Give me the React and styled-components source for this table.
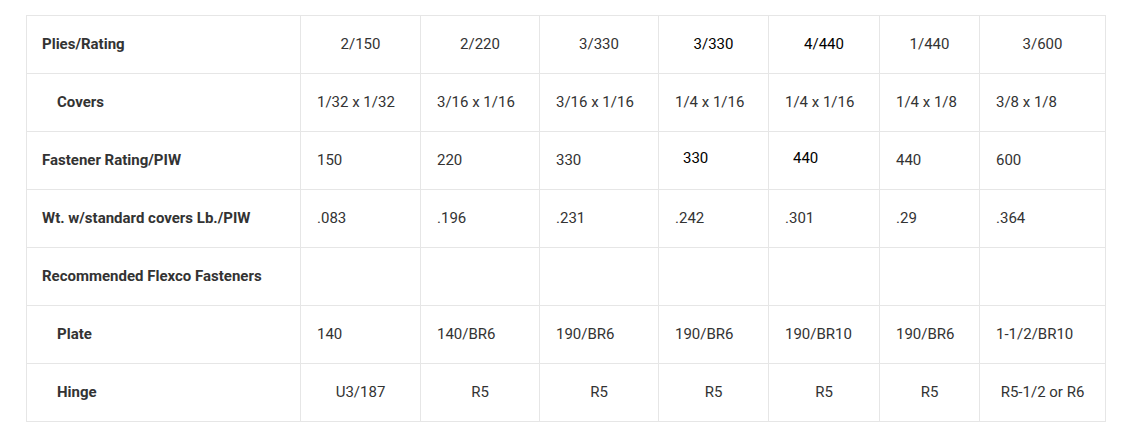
import React from "react";
import styled, { createGlobalStyle } from "styled-components";

const Global = createGlobalStyle`
  html, body { margin: 0; padding: 0; background: #fff; }
  body { font-family: Roboto, "Liberation Sans", Arial, sans-serif; }
`;

const Page = styled.div`
  padding: 15px 26px;
`;

const Table = styled.table`
  border-collapse: collapse;
  table-layout: fixed;
  width: 1080px;
  font-family: Roboto, "Liberation Sans", Arial, sans-serif;
  font-size: 15px;
  line-height: 20px;
  color: #333;
`;

const Row = styled.tr`
  height: 58px;
`;

const Label = styled.td`
  border: 1px solid #e6e6e6;
  padding: 0 0 1px ${(p) => (p.$indent ? 30 : 15)}px;
  font-weight: 700;
  color: #333;
  vertical-align: middle;
  white-space: nowrap;
`;

const Cell = styled.td`
  border: 1px solid #e6e6e6;
  padding: 0 0 ${(p) => (p.$raise ? 5 : 1)}px ${(p) => (p.$center ? 0 : p.$pad || 16)}px;
  text-align: ${(p) => (p.$center ? "center" : "left")};
  color: ${(p) => (p.$dark ? "#000" : "#333")};
  vertical-align: middle;
  white-space: nowrap;
`;

const widths = [274, 120, 119, 119, 110, 111, 100, 126];

const rows = [
  { label: "Plies/Rating", center: true, values: ["2/150", "2/220", "3/330", "3/330", "4/440", "1/440", "3/600"], dark: [3, 4] },
  { label: "Covers", indent: true, values: ["1/32 x 1/32", "3/16 x 1/16", "3/16 x 1/16", "1/4 x 1/16", "1/4 x 1/16", "1/4 x 1/8", "3/8 x 1/8"] },
  { label: "Fastener Rating/PIW", values: ["150", "220", "330", "330", "440", "440", "600"], dark: [3, 4], shifted: [3, 4] },
  { label: "Wt. w/standard covers Lb./PIW", values: [".083", ".196", ".231", ".242", ".301", ".29", ".364"] },
  { label: "Recommended Flexco Fasteners", values: ["", "", "", "", "", "", ""] },
  { label: "Plate", indent: true, values: ["140", "140/BR6", "190/BR6", "190/BR6", "190/BR10", "190/BR6", "1-1/2/BR10"] },
  { label: "Hinge", indent: true, center: true, values: ["U3/187", "R5", "R5", "R5", "R5", "R5", "R5-1/2 or R6"] },
];

export default function App() {
  return (
    <Page>
      <Global />
      <Table>
        <colgroup>
          {widths.map((w, i) => (
            <col key={i} style={{ width: w }} />
          ))}
        </colgroup>
        <tbody>
          {rows.map((r) => (
            <Row key={r.label}>
              <Label $indent={r.indent}>{r.label}</Label>
              {r.values.map((v, i) => {
                const shifted = r.shifted && r.shifted.includes(i);
                return (
                  <Cell
                    key={i}
                    $center={r.center}
                    $dark={r.dark && r.dark.includes(i)}
                    $pad={shifted ? 24 : 16}
                    $raise={shifted}
                  >
                    {v}
                  </Cell>
                );
              })}
            </Row>
          ))}
        </tbody>
      </Table>
    </Page>
  );
}
